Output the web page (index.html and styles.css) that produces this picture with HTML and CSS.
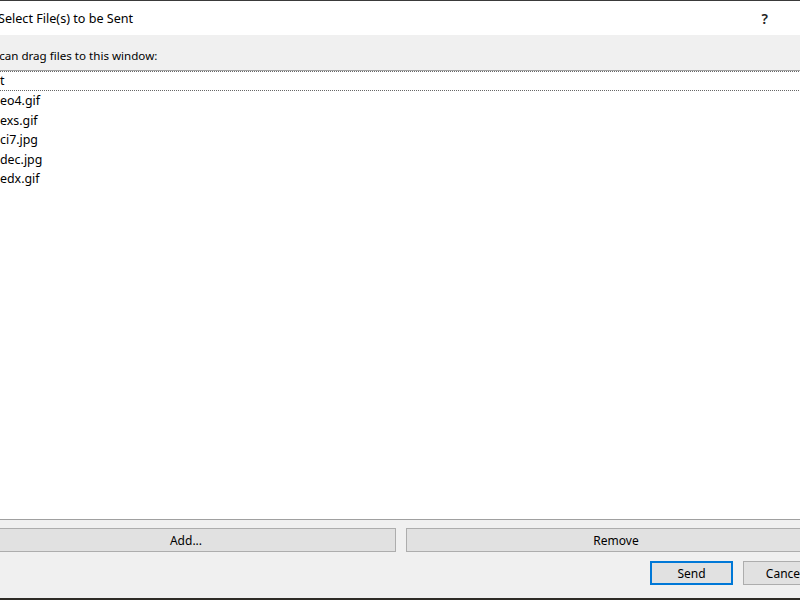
FILE: index.html
```html
<!DOCTYPE html>
<html lang="en">
<head>
    <meta charset="UTF-8">
    <title>Select File(s) to be Sent</title>
    <link rel="stylesheet" href="styles.css">
</head>
<body>
    <div class="window">
        <div class="titlebar">
            <span class="title">Select File(s) to be Sent</span>
            <span class="help">?</span>
        </div>

        <div class="content">
            <div class="hint">You can drag files to this window:</div>

            <div class="file-list">
                <div class="file-row focused">t</div>
                <div class="file-row">eo4.gif</div>
                <div class="file-row">exs.gif</div>
                <div class="file-row">ci7.jpg</div>
                <div class="file-row">dec.jpg</div>
                <div class="file-row">edx.gif</div>
            </div>

            <div class="list-buttons">
                <button class="btn">Add...</button>
                <button class="btn">Remove</button>
            </div>

            <div class="dialog-buttons">
                <button class="btn btn-default">Send</button>
                <button class="btn">Cancel</button>
            </div>
        </div>
    </div>
</body>
</html>
```

FILE: styles.css
```css
* {
    margin: 0;
    padding: 0;
    box-sizing: border-box;
}

html, body {
    width: 800px;
    height: 600px;
    overflow: hidden;
}

body {
    font-family: "Noto Sans", "Liberation Sans", sans-serif;
    font-size: 12px;
    color: #000;
    background: #2e2b26;
}

.window {
    width: 870px;
    height: 598px;
    margin-left: -34px;
    display: flex;
    flex-direction: column;
    background: #f0f0f0;
    border-top: 1px solid #3a3a3a;
}

.titlebar {
    height: 34px;
    background: #fff;
    display: flex;
    align-items: center;
    justify-content: space-between;
    padding-left: 32px;
    padding-right: 68px;
}

.title {
    font-size: 12.6px;
}

.help {
    font-size: 14px;
    font-weight: 600;
    color: #222;
}

.content {
    flex: 1;
    display: flex;
    flex-direction: column;
    padding: 13px 10px 0;
}

.hint {
    font-size: 11.6px;
    line-height: 16px;
    margin-bottom: 6px;
}

.file-list {
    height: 450px;
    background: #fff;
    border: 1px solid #a0a0a0;
    padding-left: 23px;
    font-size: 12.4px;
}

.file-row {
    height: 19.6px;
    line-height: 19.6px;
}

.file-row.focused {
    height: 20px;
    line-height: 18px;
    border-top: 1px dotted #666;
    border-bottom: 1px dotted #666;
    margin-left: -23px;
    padding-left: 23px;
}

.list-buttons {
    display: grid;
    grid-template-columns: 1fr 1fr;
    gap: 10px;
    margin-top: 8px;
}

.dialog-buttons {
    display: flex;
    gap: 10px;
    margin-top: 9px;
    padding-left: 674px;
}

.btn {
    height: 24px;
    font-family: inherit;
    font-size: 12px;
    color: #000;
    background: #e1e1e1;
    border: 1px solid #adadad;
}

.dialog-buttons .btn {
    width: 83px;
}

.btn-default {
    border-color: #0078d7;
    box-shadow: inset 0 0 0 1px #0078d7;
}
```
